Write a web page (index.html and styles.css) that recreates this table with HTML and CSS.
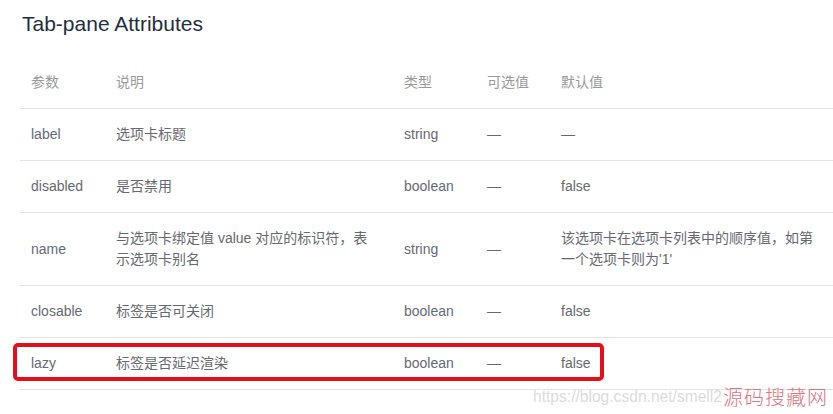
FILE: index.html
```html
<!DOCTYPE html>
<html lang="zh">
<head>
<meta charset="utf-8">
<title>Tab-pane Attributes</title>
<link rel="stylesheet" href="styles.css">
</head>
<body>
<div class="page">
  <h3 class="title">Tab-pane Attributes</h3>
  <div class="table">
    <div class="row head">
      <div class="cell c1">参数</div>
      <div class="cell c2">说明</div>
      <div class="cell c3">类型</div>
      <div class="cell c4">可选值</div>
      <div class="cell c5">默认值</div>
    </div>
    <div class="row">
      <div class="cell c1">label</div>
      <div class="cell c2">选项卡标题</div>
      <div class="cell c3">string</div>
      <div class="cell c4">—</div>
      <div class="cell c5">—</div>
    </div>
    <div class="row">
      <div class="cell c1">disabled</div>
      <div class="cell c2">是否禁用</div>
      <div class="cell c3">boolean</div>
      <div class="cell c4">—</div>
      <div class="cell c5">false</div>
    </div>
    <div class="row">
      <div class="cell c1">name</div>
      <div class="cell c2">与选项卡绑定值 value 对应的标识符，表示选项卡别名</div>
      <div class="cell c3">string</div>
      <div class="cell c4">—</div>
      <div class="cell c5">该选项卡在选项卡列表中的顺序值，如第一个选项卡则为'1'</div>
    </div>
    <div class="row">
      <div class="cell c1">closable</div>
      <div class="cell c2">标签是否可关闭</div>
      <div class="cell c3">boolean</div>
      <div class="cell c4">—</div>
      <div class="cell c5">false</div>
    </div>
    <div class="row">
      <div class="cell c1">lazy</div>
      <div class="cell c2">标签是否延迟渲染</div>
      <div class="cell c3">boolean</div>
      <div class="cell c4">—</div>
      <div class="cell c5">false</div>
    </div>
  </div>
  <div class="highlight"></div>
  <div class="watermark">
    <span class="wm-url">https://blog.csdn.net/smell2</span><span class="wm-site">源码搜藏网</span>
  </div>
</div>
</body>
</html>
```
FILE: styles.css
```css
html, body {
  margin: 0;
  padding: 0;
  background: #fff;
}

body {
  font-family: "Liberation Sans", Arial, "Noto Sans CJK SC", sans-serif;
  width: 833px;
  height: 414px;
  overflow: hidden;
}

.page {
  position: relative;
  padding: 13px 0 0 20px;
  height: 414px;
  box-sizing: border-box;
}

.title {
  margin: 0 0 23px 2px;
  font-size: 21px;
  line-height: 21px;
  font-weight: normal;
  color: #1f2f3d;
}

.table {
  display: flex;
  flex-direction: column;
}

.row {
  display: grid;
  grid-template-columns: 85px 288px 83px 74px 1fr;
  border-bottom: 1px solid #e3e3e3;
}

.cell {
  padding: 15px 11px;
  font-size: 14px;
  line-height: 21px;
  color: #666a70;
  display: flex;
  align-items: center;
}

.head .cell {
  color: #9a9a9a;
}

.c2 {
  padding-right: 22px;
}

.c5 {
  padding-right: 16px;
}

.highlight {
  position: absolute;
  left: 13px;
  top: 343px;
  width: 591px;
  height: 38px;
  box-sizing: border-box;
  border: 4px solid #e3101c;
  border-radius: 5px;
}

.watermark {
  position: absolute;
  left: 533px;
  top: 385px;
  display: flex;
  align-items: center;
  gap: 1px;
}

.wm-url {
  font-size: 15.6px;
  color: #dcdcdc;
}

.wm-site {
  font-family: "Noto Sans CJK SC", sans-serif;
  font-weight: 300;
  font-size: 20px;
  line-height: 24px;
  color: #e2737d;
  letter-spacing: 1px;
}
```
